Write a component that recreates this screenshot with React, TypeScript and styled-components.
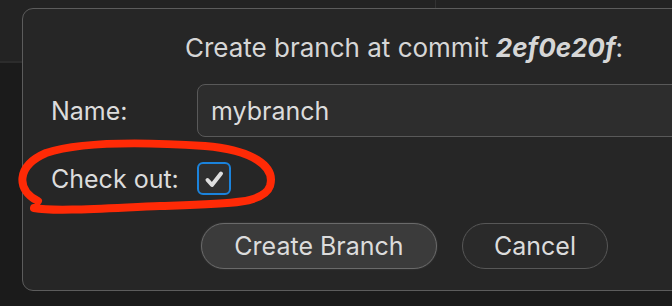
import styled, {createGlobalStyle} from "styled-components";

const GlobalStyle = createGlobalStyle`
  body {
    margin: 0;
    background: #1b1b1b;
    font-family: Inter, "Noto Sans", sans-serif;
  }
`

const Screen = styled.div`
  position: relative;
  width: 672px;
  height: 306px;
  overflow: hidden;
  background: #1b1b1b;
`

const TopBar = styled.div`
  display: flex;
  height: 61px;
  background: #232323;
  border-bottom: 2px solid #2c2c2c;
`

const TopPane = styled.div<{ $width?: number }>`
  flex: ${p => (p.$width ? `0 0 ${p.$width}px` : "1")};
  border-right: ${p => (p.$width ? "1px solid #333" : "none")};
`

const Sheet = styled.div`
  position: absolute;
  left: 22px;
  top: 8px;
  width: 764px;
  height: 283px;
  box-sizing: border-box;
  background: #262626;
  border: 1.5px solid #5c5c5c;
  border-radius: 11px;
  color: #dcdcdc;
  font-size: 25px;
`

const Title = styled.div`
  text-align: center;
  padding-top: 24px;
  line-height: 30px;
  height: 51px;
  font-size: 26px;
  color: #d6d6d6;

  b {
    font-style: italic;
    font-weight: 700;
  }
`

const Form = styled.div`
  display: grid;
  grid-template-columns: 146px 1fr;
  row-gap: 25px;
  padding-left: 28px;
  align-items: center;
`

const Label = styled.div`
  line-height: 30px;
`

const TextField = styled.div`
  height: 53px;
  box-sizing: border-box;
  border: 1.5px solid #595959;
  border-radius: 8px;
  background: #2d2d2d;
  padding-left: 13px;
  display: flex;
  align-items: center;
`

const CheckBox = styled.div`
  width: 34px;
  height: 33px;
  box-sizing: border-box;
  border: 2px solid #1b83dc;
  border-radius: 6px;
  background: #2f2f2f;
  display: flex;
  align-items: center;
  justify-content: center;
`

const Buttons = styled.div`
  grid-column: 2;
  display: flex;
  gap: 25px;
  margin-left: 4px;
  margin-top: 3px;
`

const Button = styled.div<{ $primary?: boolean }>`
  height: 46px;
  box-sizing: border-box;
  border-radius: 23px;
  display: flex;
  align-items: center;
  justify-content: center;
  width: ${p => (p.$primary ? 236 : 146)}px;
  background: ${p => (p.$primary ? "#3b3b3b" : "#2a2a2a")};
  border: 1.5px solid ${p => (p.$primary ? "#6a6a6a" : "#575757")};
  box-shadow: ${p => (p.$primary ? "0 0 2px rgba(255,255,255,0.15)" : "none")};
`

const Annotation = styled.svg`
  position: absolute;
  left: 0;
  top: 0;
  pointer-events: none;
`

const App = () => {
  return (
    <Screen>
      <GlobalStyle/>
      <TopBar>
        <TopPane $width={435}/>
        <TopPane/>
      </TopBar>
      <Sheet>
        <Title>Create branch at commit <b>2ef0e20f</b>:</Title>
        <Form>
          <Label>Name:</Label>
          <TextField>mybranch</TextField>
          <Label>Check out:</Label>
          <div>
            <CheckBox>
              <svg width="24" height="20" viewBox="0 0 24 20">
                <path d="M5.5 11 L10 16 L19 4.5" fill="none" stroke="#dedede" strokeWidth="4" strokeLinecap="round" strokeLinejoin="round"/>
              </svg>
            </CheckBox>
          </div>
          <Buttons>
            <Button $primary>Create Branch</Button>
            <Button>Cancel</Button>
          </Buttons>
        </Form>
      </Sheet>
      <Annotation width="672" height="306" viewBox="0 0 672 306">
        <path
          d="M38 201 C 16 190, 16 166, 46 153 C 85 140, 160 143, 205 146 C 252 150, 276 166, 270 186 C 264 204, 228 204, 160 206 C 110 208, 55 212, 34 208"
          fill="none" stroke="#ff2a06" strokeWidth="8" strokeLinecap="round" strokeLinejoin="round"/>
      </Annotation>
    </Screen>
  )
}

export default App;
